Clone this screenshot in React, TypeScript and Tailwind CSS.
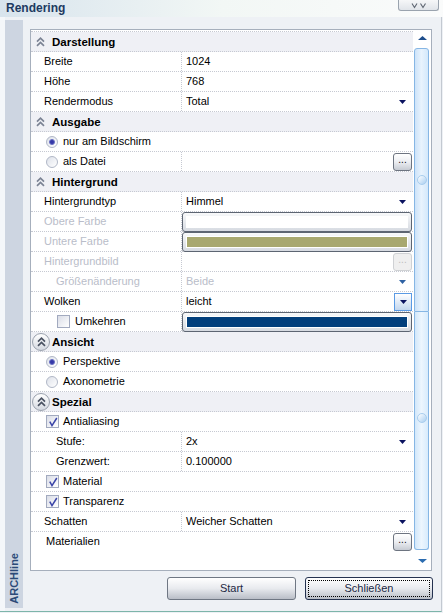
import React from "react";

const ROW = "flex h-[20px] shrink-0 border-b border-dotted border-[#c6c9d2]";
const LBL = "flex w-[151px] shrink-0 items-center border-r border-dotted border-[#c6c9d2]";

function Tri({ color = "#0b1360" }: { color?: string }) {
  return (
    <svg width="7" height="4" viewBox="0 0 7 4">
      <path d="M0 0H7L3.5 4Z" fill={color} />
    </svg>
  );
}

function Chevrons({ color = "#7b8394" }: { color?: string }) {
  return (
    <svg width="9" height="10" viewBox="0 0 9 10" fill="none" stroke={color} strokeWidth="1.7">
      <path d="M1 4.6L4.5 1.2L8 4.6" />
      <path d="M1 8.8L4.5 5.4L8 8.8" />
    </svg>
  );
}

function Header({ title, circled }: { title: string; circled?: boolean }) {
  return (
    <div className={ROW + " items-center bg-[#eff0f5]"}>
      {circled ? (
        <div className="ml-[1px] mr-[2px] flex h-[18px] w-[18px] items-center justify-center rounded-full border border-[#9aa1ad] bg-gradient-to-b from-white to-[#d5d9e1]">
          <Chevrons color="#4b5363" />
        </div>
      ) : (
        <div className="ml-[5px] mr-[7px] flex w-[9px] justify-center">
          <Chevrons />
        </div>
      )}
      <span className="text-[11.5px] font-bold leading-[14px] text-black">{title}</span>
    </div>
  );
}

function Radio({ checked }: { checked?: boolean }) {
  return (
    <div className="flex h-[12px] w-[12px] shrink-0 items-center justify-center rounded-full border border-[#b0b7c6] bg-gradient-to-br from-[#dde1e9] to-white">
      {checked && <div className="h-[6px] w-[6px] rounded-full border border-[#6c72c4] bg-[#3438a8]" />}
    </div>
  );
}

function Check({ checked }: { checked?: boolean }) {
  return (
    <div className="flex h-[13px] w-[13px] shrink-0 items-center justify-center border border-[#a2aabf] bg-gradient-to-br from-[#dadde7] to-white">
      {checked && (
        <svg width="10" height="10" viewBox="0 0 10 10" fill="none">
          <path d="M1.8 4.6L4 8.6L8.8 1" stroke="#3b45a8" strokeWidth="1.5" />
        </svg>
      )}
    </div>
  );
}

function Dots({ disabled }: { disabled?: boolean }) {
  return (
    <div
      className={
        disabled
          ? "ml-auto mr-[1px] mt-[1px] flex h-[18px] w-[19px] justify-center rounded-[3px] border border-[#cfd1d4] bg-[#efefef] text-[#bdbdbd]"
          : "ml-auto mr-[1px] mt-[1px] flex h-[18px] w-[19px] justify-center rounded-[3px] border border-[#6d7480] bg-gradient-to-b from-white via-[#eceef2] to-[#c6cbd3] text-[#101010]"
      }
    >
      <span className="text-[10px] leading-[12px]">...</span>
    </div>
  );
}

function Swatch({ fill }: { fill: string }) {
  return (
    <div className="mr-[1px] h-[20px] flex-1 rounded-[3px] border border-[#5d6572] bg-gradient-to-b from-[#f8f9fa] to-[#d6dae1] p-[3px]">
      <div className="h-full bg-white p-[1px]">
        <div className={"h-full " + fill} />
      </div>
    </div>
  );
}

function Value({ text, arrow, disabled, arrowColor }: { text: string; arrow?: boolean; disabled?: boolean; arrowColor?: string }) {
  return (
    <div className="flex flex-1 items-center pl-[4px]">
      <span className={disabled ? "text-[#b9bdc9]" : "text-black"}>{text}</span>
      {arrow && (
        <div className="ml-auto mr-[7px] flex">
          <Tri color={arrowColor} />
        </div>
      )}
    </div>
  );
}

function Prop({
  label,
  value,
  arrow,
  disabled,
  sub,
}: {
  label: string;
  value: string;
  arrow?: boolean;
  disabled?: boolean;
  sub?: boolean;
}) {
  return (
    <div className={ROW}>
      <div className={LBL + (sub ? " pl-[25px]" : " pl-[13px]")}>
        <span className={disabled ? "text-[#b9bdc9]" : "text-black"}>{label}</span>
      </div>
      <Value text={value} arrow={arrow} disabled={disabled} arrowColor={disabled ? "#2f62a3" : undefined} />
    </div>
  );
}

function RadioRow({ label, checked }: { label: string; checked?: boolean }) {
  return (
    <div className={ROW + " items-center pl-[15px]"}>
      <Radio checked={checked} />
      <span className="ml-[5px]">{label}</span>
    </div>
  );
}

function CheckRow({ label }: { label: string }) {
  return (
    <div className={ROW + " items-center pl-[15px]"}>
      <Check checked />
      <span className="ml-[4px]">{label}</span>
    </div>
  );
}

function Scrollbar() {
  return (
    <div className="flex w-[18px] shrink-0 flex-col">
      <div className="mt-[6px] flex h-[4px] justify-center">
        <svg width="9" height="4" viewBox="0 0 9 4">
          <path d="M0 4H9L4.5 0Z" fill="#1e4e8c" />
        </svg>
      </div>
      <div className="ml-[1px] mt-[8px] flex h-[264px] w-[15px] items-center justify-center rounded-t-[3px] border border-[#86b6e4] bg-gradient-to-r from-[#cde3f9] via-[#e8f3fd] to-[#d3e8fb]">
        <div className="h-[10px] w-[10px] rounded-full border border-[#a8cdee] bg-gradient-to-br from-white to-[#a9cff1]" />
      </div>
      <div className="ml-[1px] flex h-[238px] w-[15px] flex-col items-center rounded-b-[3px] border-x border-b border-[#86b6e4] bg-gradient-to-r from-[#d2e7fa] via-[#edf6fe] to-[#d8ebfc] pt-[101px]">
        <div className="h-[10px] w-[10px] rounded-full border border-[#a8cdee] bg-gradient-to-br from-white to-[#a9cff1]" />
      </div>
      <div className="mt-[9px] flex h-[4px] justify-center">
        <svg width="9" height="4" viewBox="0 0 9 4">
          <path d="M0 0H9L4.5 4Z" fill="#2b6cb0" />
        </svg>
      </div>
    </div>
  );
}

export default function App() {
  return (
    <div className="h-[613px] w-[443px] overflow-hidden bg-[#eef1f5] font-['Liberation_Sans',Arial,sans-serif] text-[11px] leading-[13px] text-black">
      {/* title bar */}
      <div className="flex h-[17px] items-start bg-gradient-to-r from-[#d8e4ed] via-[#f2f7f5] to-[#fafbfb]">
        <span className="ml-[6px] mt-[1px] text-[12px] font-bold leading-[15px] text-[#1d3a61]">Rendering</span>
        <div className="ml-auto mr-[4px] flex h-[11px] w-[41px] justify-center rounded-b-[3px] border-x border-b border-[#9aa3ae] bg-gradient-to-b from-[#f6f7f8] to-[#e0e4e9]">
          <svg width="16" height="10" viewBox="0 0 16 10" fill="none" stroke="#5d6571" strokeWidth="1.1">
            <path d="M1 3.5L3.5 7.5L6 3.5" />
            <path d="M9.5 3.5L12 7.5L14.5 3.5" />
          </svg>
        </div>
      </div>

      {/* body */}
      <div className="flex h-[595px] w-[442px] border-b border-r border-b-[#7db5aa] border-r-[#c3c9d1]">
        <div className="w-[5px] shrink-0 bg-[#f4f7fa]" />
        <div className="mt-[3px] flex h-[588px] w-[18px] shrink-0 flex-col items-center justify-end bg-[#cdd5e1] pb-[4px]">
          <span className="rotate-180 text-[11px] font-bold leading-[13px] text-[#2b4a78] [writing-mode:vertical-rl]">ARCHline</span>
        </div>

        <div className="ml-[7px] flex w-[403px] flex-col">
          <div className="mt-[12px] flex h-[542px] w-[402px] border border-[#a6afbc] bg-white">
            <div className="mt-[1px] flex w-[382px] shrink-0 flex-col border-t border-dotted border-[#c6c9d2]">
              <Header title="Darstellung" />
              <Prop label="Breite" value="1024" />
              <Prop label="Höhe" value="768" />
              <Prop label="Rendermodus" value="Total" arrow />

              <Header title="Ausgabe" />
              <RadioRow label="nur am Bildschirm" checked />
              <div className={ROW}>
                <div className={LBL + " pl-[15px]"}>
                  <Radio />
                  <span className="ml-[5px]">als Datei</span>
                </div>
                <div className="flex flex-1 items-start">
                  <Dots />
                </div>
              </div>

              <Header title="Hintergrund" />
              <Prop label="Hintergrundtyp" value="Himmel" arrow />
              <div className={ROW}>
                <div className={LBL + " pl-[13px]"}>
                  <span className="text-[#b9bdc9]">Obere Farbe</span>
                </div>
                <div className="flex flex-1 items-start">
                  <Swatch fill="bg-white" />
                </div>
              </div>
              <div className={ROW}>
                <div className={LBL + " pl-[13px]"}>
                  <span className="text-[#b9bdc9]">Untere Farbe</span>
                </div>
                <div className="flex flex-1 items-start">
                  <Swatch fill="bg-[#a8a86f]" />
                </div>
              </div>
              <div className={ROW}>
                <div className={LBL + " pl-[13px]"}>
                  <span className="text-[#b9bdc9]">Hintergrundbild</span>
                </div>
                <div className="flex flex-1 items-start">
                  <Dots disabled />
                </div>
              </div>
              <Prop label="Größenänderung" value="Beide" arrow disabled sub />
              <div className={ROW}>
                <div className={LBL + " pl-[13px]"}>
                  <span>Wolken</span>
                </div>
                <div className="flex flex-1 items-center pl-[4px]">
                  <span>leicht</span>
                  <div className="ml-auto mr-[1px] flex h-[18px] w-[18px] items-center justify-center border border-[#5a9ae4] bg-gradient-to-b from-white to-[#c3d7ee]">
                    <Tri />
                  </div>
                </div>
              </div>
              <div className={ROW}>
                <div className={LBL + " pl-[26px]"}>
                  <Check />
                  <span className="ml-[5px]">Umkehren</span>
                </div>
                <div className="flex flex-1 items-start">
                  <Swatch fill="bg-[#023f7c]" />
                </div>
              </div>

              <Header title="Ansicht" circled />
              <RadioRow label="Perspektive" checked />
              <RadioRow label="Axonometrie" />

              <Header title="Spezial" circled />
              <CheckRow label="Antialiasing" />
              <Prop label="Stufe:" value="2x" arrow sub />
              <Prop label="Grenzwert:" value="0.100000" sub />
              <CheckRow label="Material" />
              <CheckRow label="Transparenz" />
              <Prop label="Schatten" value="Weicher Schatten" arrow />
              <div className="flex h-[20px] shrink-0 items-start">
                <span className="ml-[15px] mt-[3px]">Materialien</span>
                <Dots />
              </div>
            </div>
            <Scrollbar />
          </div>

          <div className="mt-[6px] flex justify-end gap-[9px]">
            <button className="h-[23px] w-[129px] rounded-[3px] border border-[#6f7783] bg-gradient-to-b from-white via-[#e8eaee] to-[#b9bec7] text-[11px] text-[#1c2944]">
              Start
            </button>
            <button className="flex h-[23px] w-[128px] rounded-[3px] border border-[#243250] bg-gradient-to-b from-white via-[#e8eaee] to-[#b9bec7] p-[2px] text-[11px] text-[#1c2944]">
              <span className="flex flex-1 items-center justify-center border border-dotted border-black">Schließen</span>
            </button>
          </div>
        </div>
      </div>
    </div>
  );
}
